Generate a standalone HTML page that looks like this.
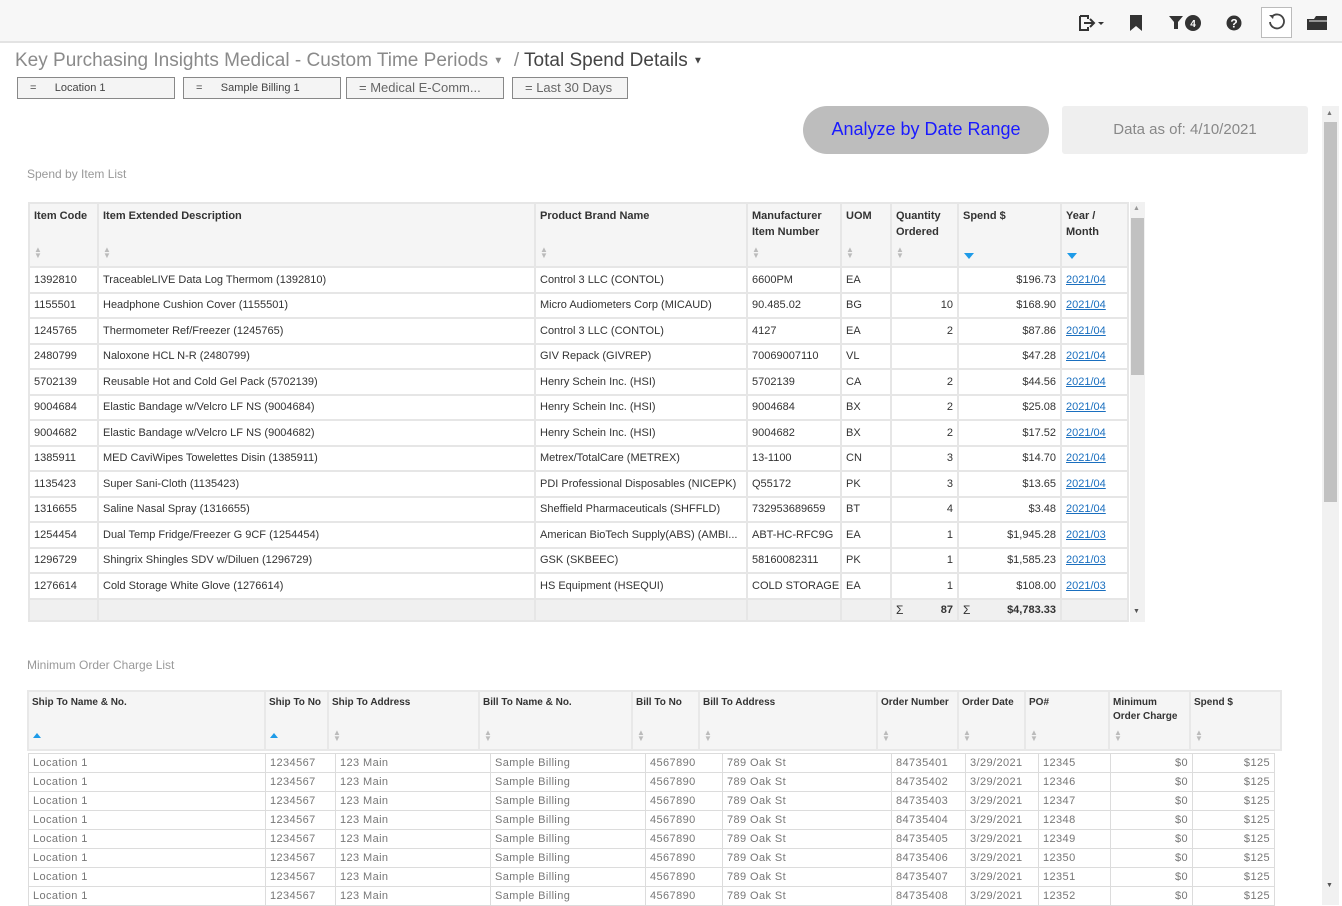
<!DOCTYPE html>
<html><head><meta charset="utf-8"><style>
*{box-sizing:border-box;margin:0;padding:0}
body{width:1342px;height:905px;overflow:hidden;background:#fff;font-family:"Liberation Sans",sans-serif;position:relative;color:#333}
.abs{position:absolute}
.top{left:0;top:0;width:1342px;height:43px;background:#f7f7f7;border-bottom:2px solid #e3e3e3}
.title{left:15px;top:50px;font-size:19px;color:#8a8a8a;white-space:nowrap}
.title b{font-weight:normal;color:#444}
.car{font-size:10px;vertical-align:middle}
.chip{top:77px;height:22px;border:1px solid #888;background:#f4f4f4;font-size:11px;color:#444;line-height:20px;padding-left:12px}
.chip2{font-size:13px;color:#666;padding-left:12px}
.btn{left:803px;top:106px;width:246px;height:48px;border-radius:24px;background:#bdbdbd;color:#1a1aff;font-size:18px;text-align:center;line-height:46px}
.dat{left:1062px;top:106px;width:246px;height:48px;background:#efefef;color:#888;font-size:15px;text-align:center;line-height:47px;border-radius:3px}
.sec{font-size:12px;color:#999}
table{border-collapse:collapse;table-layout:fixed}
td{overflow:hidden;white-space:nowrap}
th{overflow:hidden;white-space:normal}
.t1 th{background:#f5f5f5;border:2px solid #e6e6e6;font-size:11px;font-weight:bold;color:#333;text-align:left;vertical-align:top;padding:4px 4px;height:64px;line-height:16px;position:relative}
.t1 td{border:2px solid #e6e6e6;font-size:11px;color:#333;padding:0 4px;height:25.5px;line-height:14px}
.r{text-align:right}
.t1 a{color:#1a6fbf;text-decoration:underline}
.s{position:absolute;left:4px;bottom:7px;font-size:8px;color:#bbb;line-height:6px}
.sb{position:absolute;left:5px;bottom:7px;width:0;height:0;border-left:5px solid transparent;border-right:5px solid transparent;border-top:6px solid #1e9be8}
.su{position:absolute;left:4px;bottom:11px;width:0;height:0;border-left:4px solid transparent;border-right:4px solid transparent;border-bottom:5px solid #1e9be8}
.tot td{background:#f0f0f0;font-weight:bold;height:22px}
.t2 th{background:#f5f5f5;border:2px solid #e8e8e8;font-size:10px;font-weight:bold;color:#333;text-align:left;vertical-align:top;padding:4px 3px;height:59px;line-height:14px;position:relative}
.t2 td{border:1px solid #dcdcdc;font-size:11px;color:#777;padding:0 4px;height:19px;letter-spacing:.4px}
</style></head><body>
<div class="abs top"></div>
<svg class="abs" style="left:1078px;top:14px" width="28" height="18" viewBox="0 0 28 18"><path d="M2 2h8v3M10 13v3H2V2" fill="none" stroke="#333" stroke-width="2"/><path d="M6 9h9M12 5l4 4-4 4" fill="none" stroke="#333" stroke-width="2"/><path d="M20 8h6l-3 3z" fill="#333"/></svg>
<svg class="abs" style="left:1129px;top:14px" width="14" height="18" viewBox="0 0 14 18"><path d="M1 1h12v16l-6-5-6 5z" fill="#333"/></svg>
<svg class="abs" style="left:1168px;top:13px" width="36" height="20" viewBox="0 0 36 20"><path d="M1 3h14l-5 6v7h-4v-7z" fill="#333"/><circle cx="25" cy="10" r="8" fill="#333"/><text x="25" y="14" font-size="10" font-weight="bold" fill="#fff" text-anchor="middle" font-family="Liberation Sans">4</text></svg>
<svg class="abs" style="left:1226px;top:15px" width="16" height="16" viewBox="0 0 16 16"><circle cx="8" cy="8" r="7.5" fill="#333"/><text x="8" y="12.5" font-size="12" font-weight="bold" fill="#fff" text-anchor="middle" font-family="Liberation Sans">?</text></svg>
<div class="abs" style="left:1261px;top:7px;width:31px;height:31px;border:1px solid #bbb;background:#fff"></div>
<svg class="abs" style="left:1266px;top:12px" width="20" height="20" viewBox="0 0 20 20"><path d="M6 4.5A7 7 0 1 1 4 10" fill="none" stroke="#444" stroke-width="1.8"/><path d="M3 3l5 0-1 4z" fill="#444"/></svg>
<svg class="abs" style="left:1306px;top:15px" width="22" height="16" viewBox="0 0 22 16"><path d="M1 4h7l2-3h11v14H1z" fill="#333"/><path d="M3 6h18" stroke="#f7f7f7" stroke-width="1"/></svg>

<div class="abs title">Key Purchasing Insights Medical - Custom Time Periods <span class="car">▼</span> &nbsp;/ <b>Total Spend Details</b> <span class="car" style="color:#444">▼</span></div>
<div class="abs chip" style="left:17px;width:158px">=&nbsp;&nbsp;&nbsp;&nbsp;&nbsp;&nbsp;Location 1</div>
<div class="abs chip" style="left:183px;width:158px">=&nbsp;&nbsp;&nbsp;&nbsp;&nbsp;&nbsp;Sample Billing 1</div>
<div class="abs chip chip2" style="left:346px;width:158px">= Medical E-Comm...</div>
<div class="abs chip chip2" style="left:512px;width:116px">= Last 30 Days</div>
<div class="abs btn">Analyze by Date Range</div>
<div class="abs dat">Data as of: 4/10/2021</div>

<div class="abs" style="left:1322px;top:106px;width:17px;height:799px;background:#f1f1f1"></div>
<div class="abs" style="left:1324px;top:122px;width:13px;height:380px;background:#c1c1c1"></div>
<div class="abs" style="left:1326px;top:110px;font-size:7px;color:#777">▲</div>
<div class="abs" style="left:1326px;top:882px;font-size:7px;color:#555">▼</div>

<div class="abs sec" style="left:27px;top:167px">Spend by Item List</div>
<table class="abs t1" style="left:28px;top:202px;width:1099px">
<colgroup><col style="width:69px"><col style="width:437px"><col style="width:212px"><col style="width:94px"><col style="width:50px"><col style="width:67px"><col style="width:103px"><col style="width:67px"></colgroup>
<tr><th>Item Code<span class="s">▲<br>▼</span></th><th>Item Extended Description<span class="s">▲<br>▼</span></th><th>Product Brand Name<span class="s">▲<br>▼</span></th><th>Manufacturer Item Number<span class="s">▲<br>▼</span></th><th>UOM<span class="s">▲<br>▼</span></th><th>Quantity Ordered<span class="s">▲<br>▼</span></th><th>Spend $<span class="sb"></span></th><th>Year / Month<span class="sb"></span></th></tr>
<tr><td>1392810</td><td>TraceableLIVE Data Log Thermom (1392810)</td><td>Control 3 LLC (CONTOL)</td><td>6600PM</td><td>EA</td><td class="r"></td><td class="r">$196.73</td><td><a>2021/04</a></td></tr>
<tr><td>1155501</td><td>Headphone Cushion Cover (1155501)</td><td>Micro Audiometers Corp (MICAUD)</td><td>90.485.02</td><td>BG</td><td class="r">10</td><td class="r">$168.90</td><td><a>2021/04</a></td></tr>
<tr><td>1245765</td><td>Thermometer Ref/Freezer (1245765)</td><td>Control 3 LLC (CONTOL)</td><td>4127</td><td>EA</td><td class="r">2</td><td class="r">$87.86</td><td><a>2021/04</a></td></tr>
<tr><td>2480799</td><td>Naloxone HCL N-R (2480799)</td><td>GIV Repack (GIVREP)</td><td>70069007110</td><td>VL</td><td class="r"></td><td class="r">$47.28</td><td><a>2021/04</a></td></tr>
<tr><td>5702139</td><td>Reusable Hot and Cold Gel Pack (5702139)</td><td>Henry Schein Inc. (HSI)</td><td>5702139</td><td>CA</td><td class="r">2</td><td class="r">$44.56</td><td><a>2021/04</a></td></tr>
<tr><td>9004684</td><td>Elastic Bandage w/Velcro LF NS (9004684)</td><td>Henry Schein Inc. (HSI)</td><td>9004684</td><td>BX</td><td class="r">2</td><td class="r">$25.08</td><td><a>2021/04</a></td></tr>
<tr><td>9004682</td><td>Elastic Bandage w/Velcro LF NS (9004682)</td><td>Henry Schein Inc. (HSI)</td><td>9004682</td><td>BX</td><td class="r">2</td><td class="r">$17.52</td><td><a>2021/04</a></td></tr>
<tr><td>1385911</td><td>MED CaviWipes Towelettes Disin (1385911)</td><td>Metrex/TotalCare (METREX)</td><td>13-1100</td><td>CN</td><td class="r">3</td><td class="r">$14.70</td><td><a>2021/04</a></td></tr>
<tr><td>1135423</td><td>Super Sani-Cloth (1135423)</td><td>PDI Professional Disposables (NICEPK)</td><td>Q55172</td><td>PK</td><td class="r">3</td><td class="r">$13.65</td><td><a>2021/04</a></td></tr>
<tr><td>1316655</td><td>Saline Nasal Spray (1316655)</td><td>Sheffield Pharmaceuticals (SHFFLD)</td><td>732953689659</td><td>BT</td><td class="r">4</td><td class="r">$3.48</td><td><a>2021/04</a></td></tr>
<tr><td>1254454</td><td>Dual Temp Fridge/Freezer G 9CF (1254454)</td><td>American BioTech Supply(ABS) (AMBI...</td><td>ABT-HC-RFC9G</td><td>EA</td><td class="r">1</td><td class="r">$1,945.28</td><td><a>2021/03</a></td></tr>
<tr><td>1296729</td><td>Shingrix Shingles SDV w/Diluen (1296729)</td><td>GSK (SKBEEC)</td><td>58160082311</td><td>PK</td><td class="r">1</td><td class="r">$1,585.23</td><td><a>2021/03</a></td></tr>
<tr><td>1276614</td><td>Cold Storage White Glove (1276614)</td><td>HS Equipment (HSEQUI)</td><td>COLD STORAGE</td><td>EA</td><td class="r">1</td><td class="r">$108.00</td><td><a>2021/03</a></td></tr>
<tr class="tot"><td></td><td></td><td></td><td></td><td></td><td class="r"><span style="float:left;font-weight:normal;font-size:12px;line-height:14px">Σ</span>87</td><td class="r"><span style="float:left;font-weight:normal;font-size:12px;line-height:14px">Σ</span>$4,783.33</td><td></td></tr>
</table>
<div class="abs" style="left:1130px;top:202px;width:15px;height:420px;background:#f1f1f1"></div>
<div class="abs" style="left:1131px;top:218px;width:13px;height:157px;background:#c1c1c1"></div>
<div class="abs" style="left:1133px;top:205px;font-size:7px;color:#999">▲</div>
<div class="abs" style="left:1133px;top:608px;font-size:7px;color:#555">▼</div>

<div class="abs sec" style="left:27px;top:658px">Minimum Order Charge List</div>
<table class="abs t2" style="left:27px;top:690px;width:1253px">
<colgroup><col style="width:237px"><col style="width:63px"><col style="width:151px"><col style="width:153px"><col style="width:67px"><col style="width:178px"><col style="width:81px"><col style="width:67px"><col style="width:84px"><col style="width:81px"><col style="width:91px"></colgroup>
<tr><th>Ship To Name &amp; No.<span class="su"></span></th><th>Ship To No<span class="su"></span></th><th>Ship To Address<span class="s">▲<br>▼</span></th><th>Bill To Name &amp; No.<span class="s">▲<br>▼</span></th><th>Bill To No<span class="s">▲<br>▼</span></th><th>Bill To Address<span class="s">▲<br>▼</span></th><th>Order Number<span class="s">▲<br>▼</span></th><th>Order Date<span class="s">▲<br>▼</span></th><th>PO#<span class="s">▲<br>▼</span></th><th>Minimum Order Charge<span class="s">▲<br>▼</span></th><th>Spend $<span class="s">▲<br>▼</span></th></tr>
</table>
<table class="abs t2" style="left:28px;top:753px;width:1246px">
<colgroup><col style="width:237px"><col style="width:70px"><col style="width:155px"><col style="width:155px"><col style="width:77px"><col style="width:169px"><col style="width:74px"><col style="width:73px"><col style="width:72px"><col style="width:82px"><col style="width:82px"></colgroup>
<tr><td>Location 1</td><td>1234567</td><td>123 Main</td><td>Sample Billing</td><td>4567890</td><td>789 Oak St</td><td>84735401</td><td>3/29/2021</td><td>12345</td><td class="r">$0</td><td class="r">$125</td></tr>
<tr><td>Location 1</td><td>1234567</td><td>123 Main</td><td>Sample Billing</td><td>4567890</td><td>789 Oak St</td><td>84735402</td><td>3/29/2021</td><td>12346</td><td class="r">$0</td><td class="r">$125</td></tr>
<tr><td>Location 1</td><td>1234567</td><td>123 Main</td><td>Sample Billing</td><td>4567890</td><td>789 Oak St</td><td>84735403</td><td>3/29/2021</td><td>12347</td><td class="r">$0</td><td class="r">$125</td></tr>
<tr><td>Location 1</td><td>1234567</td><td>123 Main</td><td>Sample Billing</td><td>4567890</td><td>789 Oak St</td><td>84735404</td><td>3/29/2021</td><td>12348</td><td class="r">$0</td><td class="r">$125</td></tr>
<tr><td>Location 1</td><td>1234567</td><td>123 Main</td><td>Sample Billing</td><td>4567890</td><td>789 Oak St</td><td>84735405</td><td>3/29/2021</td><td>12349</td><td class="r">$0</td><td class="r">$125</td></tr>
<tr><td>Location 1</td><td>1234567</td><td>123 Main</td><td>Sample Billing</td><td>4567890</td><td>789 Oak St</td><td>84735406</td><td>3/29/2021</td><td>12350</td><td class="r">$0</td><td class="r">$125</td></tr>
<tr><td>Location 1</td><td>1234567</td><td>123 Main</td><td>Sample Billing</td><td>4567890</td><td>789 Oak St</td><td>84735407</td><td>3/29/2021</td><td>12351</td><td class="r">$0</td><td class="r">$125</td></tr>
<tr><td>Location 1</td><td>1234567</td><td>123 Main</td><td>Sample Billing</td><td>4567890</td><td>789 Oak St</td><td>84735408</td><td>3/29/2021</td><td>12352</td><td class="r">$0</td><td class="r">$125</td></tr>
</table>
</body></html>
